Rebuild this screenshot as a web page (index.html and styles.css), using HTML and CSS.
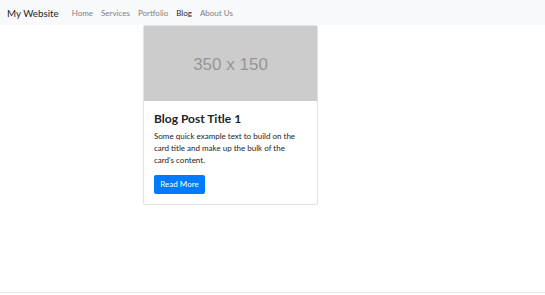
FILE: index.html
```html
<!DOCTYPE html>
<html lang="en">
<head>
    <meta charset="UTF-8">
    <meta name="viewport" content="width=device-width, initial-scale=1.0">
    <title>My Website</title>
    <link rel="stylesheet" href="styles.css">
</head>
<body>
    <div class="page">
        <nav class="navbar">
            <a class="brand" href="#">My Website</a>
            <div class="nav-links">
                <a href="#">Home</a>
                <a href="#">Services</a>
                <a href="#">Portfolio</a>
                <a href="#" class="active">Blog</a>
                <a href="#">About Us</a>
            </div>
        </nav>

        <main class="content">
            <div class="card">
                <div class="card-img">350 x 150</div>
                <div class="card-body">
                    <h5 class="card-title">Blog Post Title 1</h5>
                    <p class="card-text">Some quick example text to build on the card title and make up the bulk of the card's content.</p>
                    <a href="#" class="button">Read More</a>
                </div>
            </div>
        </main>
    </div>
</body>
</html>
```

FILE: styles.css
```css
* {
    box-sizing: border-box;
    margin: 0;
    padding: 0;
}

body {
    font-family: 'Lato', 'Open Sans', sans-serif;
    color: #212529;
    background: #fff;
    height: 295px;
    overflow: hidden;
}

.page {
    height: 293px;
    border-bottom: 1px solid #e4e4e4;
    display: flex;
    flex-direction: column;
}

.navbar {
    background: #f8f9fa;
    height: 25px;
    display: flex;
    align-items: center;
    padding: 0 7px;
}

.brand {
    color: #212529;
    text-decoration: none;
    font-size: 9.8px;
    margin-right: 13px;
}

.nav-links {
    display: flex;
    gap: 8px;
}

.nav-links a {
    color: #7f8081;
    text-decoration: none;
    font-size: 8px;
}

.nav-links a.active {
    color: #26282a;
}

.content {
    flex: 1;
    padding-left: 143px;
}

.card {
    width: 175px;
    border: 1px solid #e2e2e2;
    border-radius: 2px;
    overflow: hidden;
}

.card-img {
    height: 75px;
    padding-top: 3px;
    background: #cccccc;
    color: #969696;
    font-family: 'Liberation Sans', Arial, sans-serif;
    font-size: 17px;
    display: flex;
    align-items: center;
    justify-content: center;
}

.card-body {
    padding: 11px 10px 10px;
}

.card-title {
    font-size: 12px;
    line-height: 14px;
    font-weight: 700;
    margin-bottom: 4px;
}

.card-text {
    font-size: 8px;
    line-height: 12px;
    color: #212529;
    margin-bottom: 9px;
}

.button {
    display: block;
    width: 51px;
    text-align: center;
    background: #007bff;
    color: #fff;
    text-decoration: none;
    font-size: 8px;
    padding: 4px 0;
    border-radius: 2px;
    line-height: 11px;
}
```
